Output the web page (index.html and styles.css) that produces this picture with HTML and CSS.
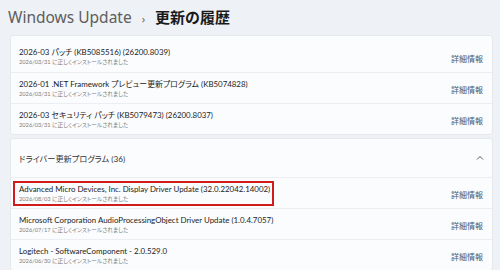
FILE: index.html
```html
<!DOCTYPE html>
<html lang="ja">
<head>
<meta charset="utf-8">
<link rel="stylesheet" href="styles.css">
</head>
<body>
<header class="crumb">
  <span class="crumb-parent">Windows Update</span>
  <span class="crumb-sep">›</span>
  <span class="crumb-current">更新の履歴</span>
</header>
<section class="card card-first">
  <div class="row">
    <div class="info">
      <div class="title">2026-03 パッチ (KB5085516) (26200.8039)</div>
      <div class="sub">2026/03/31 に正しくインストールされました</div>
    </div>
    <a class="more">詳細情報</a>
  </div>
  <div class="row">
    <div class="info">
      <div class="title">2026-01 .NET Framework プレビュー更新プログラム (KB5074828)</div>
      <div class="sub">2026/03/31 に正しくインストールされました</div>
    </div>
    <a class="more">詳細情報</a>
  </div>
  <div class="row">
    <div class="info">
      <div class="title">2026-03 セキュリティ パッチ (KB5079473) (26200.8037)</div>
      <div class="sub">2026/03/31 に正しくインストールされました</div>
    </div>
    <a class="more">詳細情報</a>
  </div>
</section>
<section class="card card-group">
  <div class="group-head">
    <span class="group-title">ドライバー更新プログラム (36)</span>
    <svg class="chev" width="8" height="6" viewBox="0 0 8 6"><polyline points="1,4.5 4,1.5 7,4.5" fill="none" stroke="#555" stroke-width="1"/></svg>
  </div>
  <div class="row">
    <div class="info highlight">
      <div class="title">Advanced Micro Devices, Inc. Display Driver Update (32.0.22042.14002)</div>
      <div class="sub">2026/08/03 に正しくインストールされました</div>
    </div>
    <a class="more">詳細情報</a>
  </div>
  <div class="row">
    <div class="info">
      <div class="title">Microsoft Corporation AudioProcessingObject Driver Update (1.0.4.7057)</div>
      <div class="sub">2026/07/17 に正しくインストールされました</div>
    </div>
    <a class="more">詳細情報</a>
  </div>
  <div class="row">
    <div class="info">
      <div class="title">Logitech - SoftwareComponent - 2.0.529.0</div>
      <div class="sub">2026/06/30 に正しくインストールされました</div>
    </div>
    <a class="more">詳細情報</a>
  </div>
</section>
</body>
</html>
```
FILE: styles.css
```css
html, body {
  margin: 0;
  padding: 0;
}
body {
  width: 500px;
  height: 270px;
  overflow: hidden;
  background: #eef1f5;
  font-family: "Lato", "Noto Sans CJK JP", sans-serif;
  font-feature-settings: "palt";
  color: #1f1f1f;
}
.crumb {
  display: flex;
  align-items: baseline;
  height: 35px;
  padding: 6px 0 0 8px;
  box-sizing: border-box;
  font-family: "Noto Sans", "Noto Sans CJK JP", sans-serif;
  font-size: 15.5px;
  line-height: 22px;
}
.crumb-parent {
  color: #5e5e5e;
}
.crumb-sep {
  color: #666;
  font-size: 11px;
  margin: 0 10px 0 10px;
}
.crumb-current {
  color: #1a1a1a;
  font-weight: 600;
  font-size: 15px;
  font-family: "Noto Sans CJK JP", sans-serif;
}
.card {
  margin: 0 7px 0 10px;
  background: #fbfcfd;
  border: 1px solid #e6e8eb;
  border-radius: 3px;
}
.card-first {
  padding-top: 5px;
}
.card-group {
  margin-top: 3px;
}
.row {
  display: flex;
  align-items: center;
  justify-content: space-between;
  box-sizing: border-box;
  height: 31px;
  padding: 0 9px 0 8px;
  border-top: 1px solid #eceef1;
}
.card > .row:first-child {
  border-top: none;
}
.info {
  display: flex;
  flex-direction: column;
}
.title {
  font-size: 7.9px;
  line-height: 10px;
  color: #222;
  white-space: nowrap;
}
.sub {
  font-size: 5.7px;
  line-height: 9px;
  color: #7d7d7d;
  white-space: nowrap;
}
.more {
  font-size: 8px;
  color: #3e5a78;
  font-family: "Noto Sans CJK JP", sans-serif;
  font-feature-settings: normal;
  margin-top: 3px;
}
.group-head {
  display: flex;
  align-items: center;
  justify-content: space-between;
  box-sizing: border-box;
  height: 38px;
  padding: 0 8px;
}
.group-title {
  font-size: 8.2px;
  color: #333;
}
.chev {
  display: block;
}
.highlight {
  border: 2px solid #d01c1c;
  margin: -2px 0 -2px -6px;
  padding: 1px 2px 1px 4px;
}
```
